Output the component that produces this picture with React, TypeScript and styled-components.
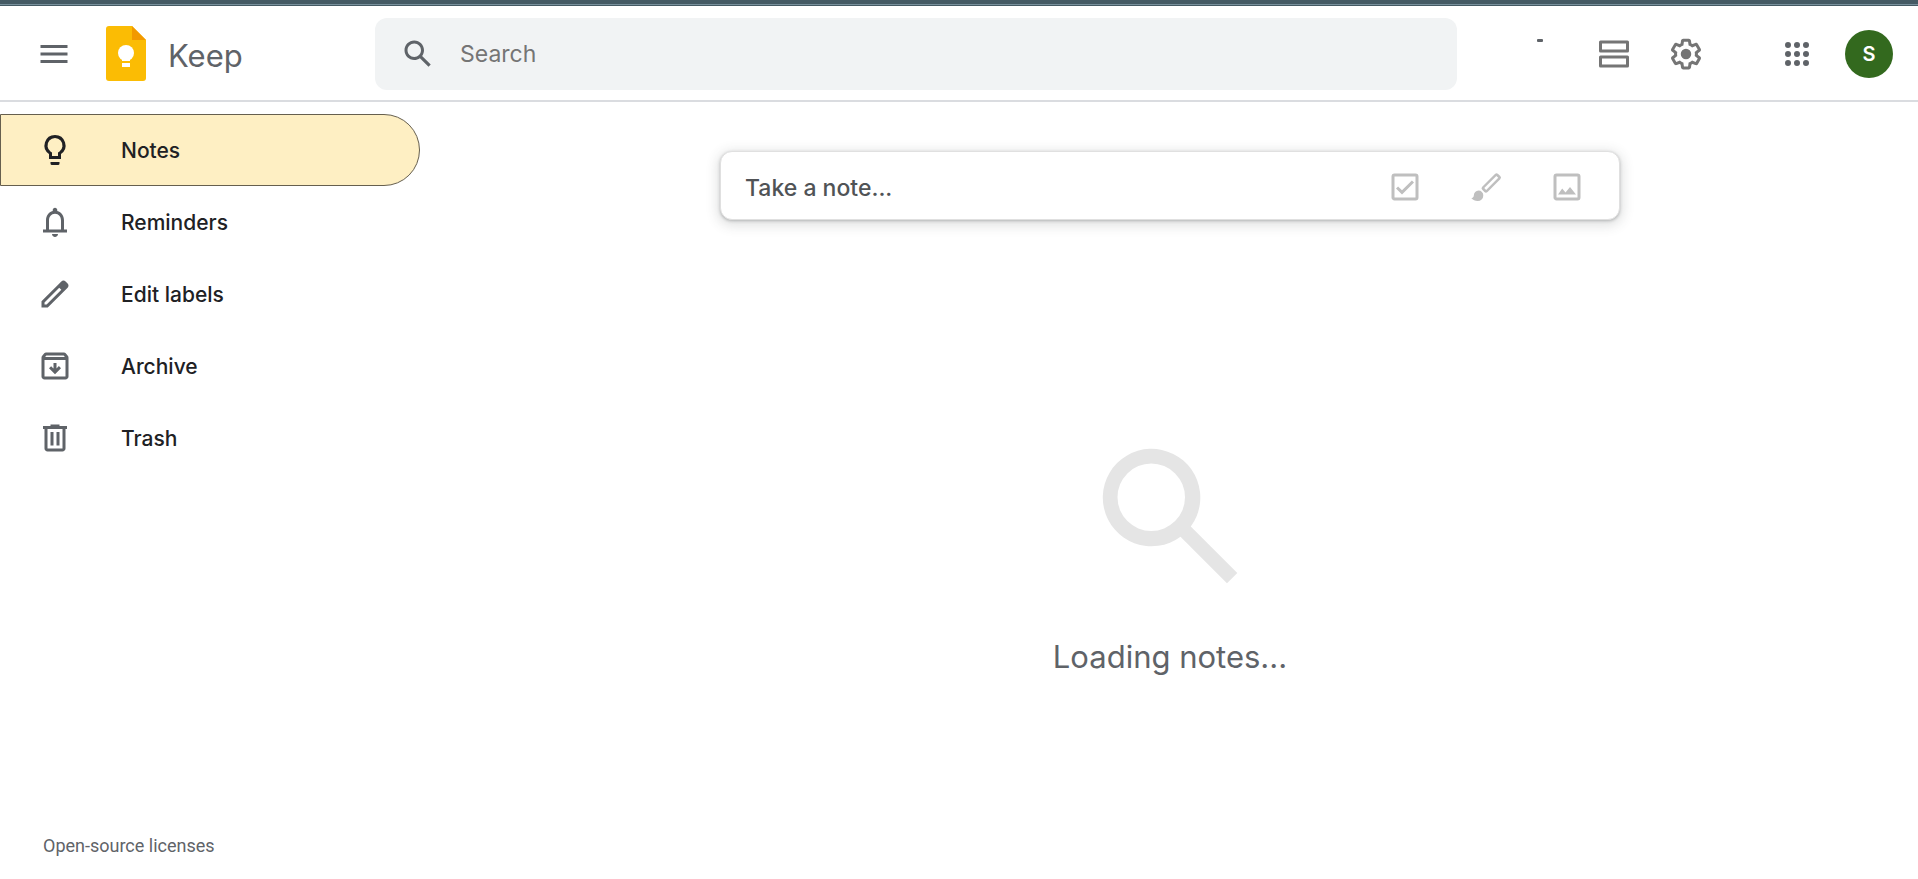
import React from "react";
import styled, { createGlobalStyle } from "styled-components";

const GlobalStyle = createGlobalStyle`
  *, *::before, *::after { box-sizing: border-box; }
  body { margin: 0; background: #fff; color: #202124; font-family: Inter, Roboto, sans-serif; }
  button, input { font: inherit; color: inherit; }
`;

const Page = styled.div`
  display: flex;
  flex-direction: column;
  min-height: 100vh;
`;

const TopStrip = styled.div`
  height: 6px;
  background: linear-gradient(#455a64 4px, #78909c 4px, #78909c 5px, #455a64 5px);
`;

const Header = styled.header`
  display: flex;
  align-items: center;
  height: 96px;
  padding: 2px 25px 0 24px;
  border-bottom: 2px solid #dadce0;
`;

const IconButton = styled.button<{ $color?: string }>`
  display: flex;
  align-items: center;
  justify-content: center;
  flex: none;
  width: 60px;
  height: 60px;
  padding: 0;
  border: 0;
  border-radius: 50%;
  background: none;
  color: ${(p) => p.$color ?? "#5f6368"};
  cursor: pointer;
`;

const Icon = styled.svg<{ $size?: number }>`
  display: block;
  flex: none;
  width: ${(p) => p.$size ?? 36}px;
  height: ${(p) => p.$size ?? 36}px;
  fill: currentColor;
`;

const Brand = styled.a`
  display: flex;
  align-items: center;
  gap: 22px;
  width: 269px;
  margin-left: 22px;
  flex: none;
  color: #5f6368;
  font-size: 31px;
  line-height: 40px;
  text-decoration: none;
`;

const BrandName = styled.span`
  padding-top: 4px;
`;

const Logo = styled.svg`
  display: block;
  width: 40px;
  height: 56px;
`;

const SearchBar = styled.form`
  display: flex;
  align-items: center;
  flex: 1;
  max-width: 1082px;
  height: 72px;
  padding: 0 13px;
  border-radius: 12px;
  background: #f1f3f4;
`;

const SearchInput = styled.input`
  flex: 1;
  min-width: 0;
  height: 48px;
  margin-left: 12px;
  padding: 0;
  border: 0;
  outline: 0;
  background: none;
  font-size: 23px;
  &::placeholder { color: #757575; opacity: 1; }
`;

const HeaderTools = styled.div`
  display: flex;
  align-items: center;
  gap: 12px;
  margin-left: auto;
`;

const SyncMark = styled.span`
  width: 6px;
  height: 3px;
  margin: 0 29px 27px 0;
  border-radius: 1px;
  background: #5f6368;
`;

const Apps = styled.div`
  display: flex;
  align-items: center;
  gap: 18px;
  margin-left: 39px;
`;

const Avatar = styled.button`
  width: 48px;
  height: 48px;
  padding: 0;
  border: 0;
  border-radius: 50%;
  background: #33691e;
  color: #fff;
  font-size: 20px;
  font-weight: 600;
  cursor: pointer;
`;

const Body = styled.div`
  display: flex;
  flex: 1;
`;

const Sidebar = styled.aside`
  display: flex;
  flex-direction: column;
  flex: none;
  width: 420px;
  padding: 12px 0 19px;
`;

const NavItem = styled.a<{ $active?: boolean }>`
  display: flex;
  align-items: center;
  gap: 48px;
  height: 72px;
  padding-left: 36px;
  border: 1px solid ${(p) => (p.$active ? "#665f4e" : "transparent")};
  border-radius: 0 36px 36px 0;
  background: ${(p) => (p.$active ? "#feefc3" : "transparent")};
  color: #202124;
  font-size: 21px;
  font-weight: 500;
  text-decoration: none;
  & > svg { color: ${(p) => (p.$active ? "#202124" : "#5f6368")}; }
`;

const FooterLink = styled.a`
  align-self: flex-start;
  margin: auto 0 0 43px;
  color: #5f6368;
  font-family: Roboto, sans-serif;
  font-size: 18px;
  line-height: 28px;
  text-decoration: none;
`;

const Main = styled.main`
  display: flex;
  flex-direction: column;
  align-items: center;
  flex: 1;
  min-width: 0;
  padding: 49px 24px 24px 26px;
`;

const NoteBar = styled.div`
  display: flex;
  align-items: center;
  gap: 21px;
  width: 100%;
  max-width: 900px;
  height: 69px;
  padding: 2px 22px 0 24px;
  border: 1px solid #e0e0e0;
  border-radius: 12px;
  background: #fff;
  box-shadow: 0 1px 3px rgba(60, 64, 67, 0.3), 0 3px 12px 3px rgba(60, 64, 67, 0.15);
`;

const NoteInput = styled.input`
  flex: 1;
  min-width: 0;
  padding: 2px 0 0;
  border: 0;
  outline: 0;
  background: none;
  font-size: 23px;
  font-weight: 500;
  &::placeholder { color: #505356; opacity: 1; }
`;

const Empty = styled.div`
  display: flex;
  flex-direction: column;
  align-items: center;
  gap: 31px;
  margin-top: 206px;
  color: #5f6368;
  font-size: 31px;
  line-height: 40px;
  & > svg { color: #e5e5e5; }
`;

const paths = {
  menu: "M3 18h18v-2H3v2zm0-5h18v-2H3v2zm0-7v2h18V6H3z",
  search:
    "M20.49 19l-5.73-5.73C15.53 12.2 16 10.91 16 9.5 16 5.91 13.09 3 9.5 3S3 5.91 3 9.5 5.91 16 9.5 16c1.41 0 2.7-.47 3.77-1.24L19 20.49 20.49 19zM5 9.5C5 7.01 7.01 5 9.5 5S14 7.01 14 9.5 11.99 14 9.5 14 5 11.99 5 9.5z",
  lens:
    "M20.97 19.6l-6.2-6.2A6.5 6.5 0 1 0 13.4 14.77l6.2 6.2zM5 9.5a4.5 4.5 0 1 1 9 0a4.5 4.5 0 0 1-9 0z",
  list: "M3 3h18a1 1 0 0 1 1 1v6a1 1 0 0 1-1 1H3a1 1 0 0 1-1-1V4a1 1 0 0 1 1-1zm1 2v4h16V5H4zM3 13h18a1 1 0 0 1 1 1v6a1 1 0 0 1-1 1H3a1 1 0 0 1-1-1v-6a1 1 0 0 1 1-1zm1 2v4h16v-4H4z",
  gear:
    "M13.85 22.25h-3.7c-.74 0-1.36-.54-1.45-1.27l-.27-1.89c-.27-.14-.53-.29-.79-.46l-1.8.72c-.7.26-1.47-.03-1.81-.65L2.2 15.53c-.35-.66-.2-1.44.36-1.88l1.53-1.19c-.01-.15-.02-.3-.02-.46 0-.15.01-.31.02-.46l-1.52-1.19c-.59-.45-.74-1.26-.37-1.88l1.85-3.19c.34-.62 1.11-.9 1.79-.63l1.81.73c.26-.17.52-.32.78-.46l.27-1.91c.09-.7.71-1.25 1.44-1.25h3.7c.74 0 1.36.54 1.45 1.27l.27 1.89c.27.14.53.29.79.46l1.8-.72c.71-.26 1.48.03 1.82.65l1.84 3.18c.36.66.2 1.44-.36 1.88l-1.52 1.19c.01.15.02.3.02.46s-.01.31-.02.46l1.52 1.19c.56.45.72 1.23.37 1.86l-1.86 3.22c-.34.62-1.11.9-1.8.63l-1.8-.72c-.26.17-.52.32-.78.46l-.27 1.91c-.1.68-.72 1.22-1.46 1.22zm-3.23-2h2.76l.37-2.55.53-.22c.44-.18.88-.44 1.34-.78l.45-.34 2.38.96 1.38-2.4-2.03-1.58.07-.56c.03-.26.06-.51.06-.78s-.03-.53-.06-.78l-.07-.56 2.03-1.58-1.39-2.4-2.39.96-.45-.35c-.42-.32-.87-.58-1.33-.77l-.52-.22-.37-2.55h-2.76l-.37 2.55-.53.21c-.44.19-.88.44-1.34.79l-.45.33-2.38-.95-1.39 2.39 2.03 1.58-.07.56a7 7 0 0 0-.06.79c0 .26.02.53.06.78l.07.56-2.03 1.58 1.38 2.4 2.39-.96.45.35c.43.33.86.58 1.33.77l.53.22.38 2.55zM12 8.5a3.5 3.5 0 1 0 0 7a3.5 3.5 0 0 0 0-7z",
  apps:
    "M6 8a2 2 0 1 0 0-4 2 2 0 0 0 0 4zm6 0a2 2 0 1 0 0-4 2 2 0 0 0 0 4zm6 0a2 2 0 1 0 0-4 2 2 0 0 0 0 4zM6 14a2 2 0 1 0 0-4 2 2 0 0 0 0 4zm6 0a2 2 0 1 0 0-4 2 2 0 0 0 0 4zm6 0a2 2 0 1 0 0-4 2 2 0 0 0 0 4zM6 20a2 2 0 1 0 0-4 2 2 0 0 0 0 4zm6 0a2 2 0 1 0 0-4 2 2 0 0 0 0 4zm6 0a2 2 0 1 0 0-4 2 2 0 0 0 0 4z",
  bulb:
    "M12 2a7 7 0 0 0-4 12.74V18h8v-3.26A7 7 0 0 0 12 2zm2.85 11.1l-.85.6V16h-4v-2.3l-.85-.6A5 5 0 1 1 14.85 13.1zM9 20h6v1a1 1 0 0 1-1 1h-4a1 1 0 0 1-1-1z",
  bell:
    "M18 17v-6c0-3.07-1.63-5.64-4.5-6.32V4c0-.83-.67-1.5-1.5-1.5s-1.5.67-1.5 1.5v.68C7.64 5.36 6 7.92 6 11v6H4v2h16v-2h-2zm-2 0H8v-6c0-2.48 1.51-4.5 4-4.5s4 2.02 4 4.5v6zm-4 5c1.1 0 2-.9 2-2h-4c0 1.1.9 2 2 2z",
  pencil:
    "M20.41 4.94l-1.35-1.35c-.78-.78-2.05-.78-2.83 0L3 16.82V21h4.18L20.41 7.77c.79-.78.79-2.05 0-2.83zm-14 14.12L5 19v-1.36l9.82-9.82 1.41 1.41-9.82 9.83z",
  archive:
    "M20.54 5.23l-1.39-1.68C18.88 3.21 18.47 3 18 3H6c-.47 0-.88.21-1.16.55L3.46 5.23C3.17 5.57 3 6.02 3 6.5V19c0 1.1.9 2 2 2h14c1.1 0 2-.9 2-2V6.5c0-.48-.17-.93-.46-1.27zM6.24 5h11.52l.83 1H5.42l.82-1zM5 19V8h14v11H5zm11-5.5l-4 4-4-4 1.41-1.41L11 13.67V10h2v3.67l1.59-1.59L16 13.5z",
  trash:
    "M15 4V3H9v1H4v2h1v13c0 1.1.9 2 2 2h10c1.1 0 2-.9 2-2V6h1V4h-5zm2 15H7V6h10v13zM9 8h2v9H9zm4 0h2v9h-2z",
  check:
    "M19 3H5a2 2 0 0 0-2 2v14c0 1.1.9 2 2 2h14a2 2 0 0 0 2-2V5a2 2 0 0 0-2-2zm0 16H5V5h14v14zM18 9l-1.4-1.4-6.6 6.6-2.6-2.6L6 13l4 4z",
  brush:
    "M7 14.3a3.2 3.2 0 0 0-3.1 3.2c0 1.2-.8 1.9-1.7 1.9 1 1.3 2.600 1.900 4.200 1.900a3.700 3.700 0 0 0 3.800-3.700A3.200 3.200 0 0 0 7 14.300zM20.090 3.290L21.510 4.710A1.500 1.500 0 0 1 21.510 6.830L13.030 15.310A1.500 1.500 0 0 1 10.910 15.310L9.490 13.890A1.500 1.500 0 0 1 9.490 11.770L17.970 3.290A1.500 1.500 0 0 1 20.090 3.290zM18.890 4.630L10.830 12.690L12.110 13.970L20.170 5.910z",
  image:
    "M19 3H5a2 2 0 0 0-2 2v14c0 1.1.9 2 2 2h14a2 2 0 0 0 2-2V5a2 2 0 0 0-2-2zm0 16H5V5h14v14zM6 17l2.800-4 2.200 2.600L14 12l4 5z",
};

type IconName = keyof typeof paths;

function Glyph({ name, size }: { name: IconName; size?: number }) {
  return (
    <Icon viewBox="0 0 24 24" $size={size} aria-hidden="true">
      <path fillRule="evenodd" d={paths[name]} />
    </Icon>
  );
}

const navItems: { label: string; icon: IconName }[] = [
  { label: "Notes", icon: "bulb" },
  { label: "Reminders", icon: "bell" },
  { label: "Edit labels", icon: "pencil" },
  { label: "Archive", icon: "archive" },
  { label: "Trash", icon: "trash" },
];

const noteTools: { label: string; icon: IconName }[] = [
  { label: "New list", icon: "check" },
  { label: "New note with drawing", icon: "brush" },
  { label: "New note with image", icon: "image" },
];

export default function App() {
  return (
    <Page>
      <GlobalStyle />
      <TopStrip />
      <Header>
        <IconButton aria-label="Main menu"><Glyph name="menu" /></IconButton>
        <Brand href="#">
          <Logo viewBox="0 0 40 56" aria-hidden="true">
            <path fill="#fbbc04" d="M26 0H3a3 3 0 0 0-3 3v49a3 3 0 0 0 3 3h34a3 3 0 0 0 3-3V14z" />
            <path fill="#f29900" d="M26 0v14h14z" />
            <circle cx="20" cy="27" r="8" fill="#fff" />
            <path fill="#fff" d="M16 32h8v3h-8zM16 37h8v4h-8z" />
          </Logo>
          <BrandName>Keep</BrandName>
        </Brand>
        <SearchBar role="search">
          <IconButton type="button" aria-label="Search"><Glyph name="search" /></IconButton>
          <SearchInput type="text" placeholder="Search" aria-label="Search" />
        </SearchBar>
        <HeaderTools>
          <SyncMark />
          <IconButton $color="#757575" aria-label="List view"><Glyph name="list" /></IconButton>
          <IconButton $color="#757575" aria-label="Settings"><Glyph name="gear" /></IconButton>
          <Apps>
            <IconButton aria-label="Google apps"><Glyph name="apps" /></IconButton>
            <Avatar aria-label="Account">S</Avatar>
          </Apps>
        </HeaderTools>
      </Header>
      <Body>
        <Sidebar>
          <nav>
            {navItems.map((item, i) => (
              <NavItem key={item.label} href="#" $active={i === 0}>
                <Glyph name={item.icon} />
                {item.label}
              </NavItem>
            ))}
          </nav>
          <FooterLink href="#">Open-source licenses</FooterLink>
        </Sidebar>
        <Main>
          <NoteBar>
            <NoteInput type="text" placeholder="Take a note..." aria-label="Take a note" />
            {noteTools.map((tool) => (
              <IconButton key={tool.label} $color="#bfbfbf" aria-label={tool.label}>
                <Glyph name={tool.icon} />
              </IconButton>
            ))}
          </NoteBar>
          <Empty>
            <Glyph name="lens" size={180} />
            Loading notes...
          </Empty>
        </Main>
      </Body>
    </Page>
  );
}
